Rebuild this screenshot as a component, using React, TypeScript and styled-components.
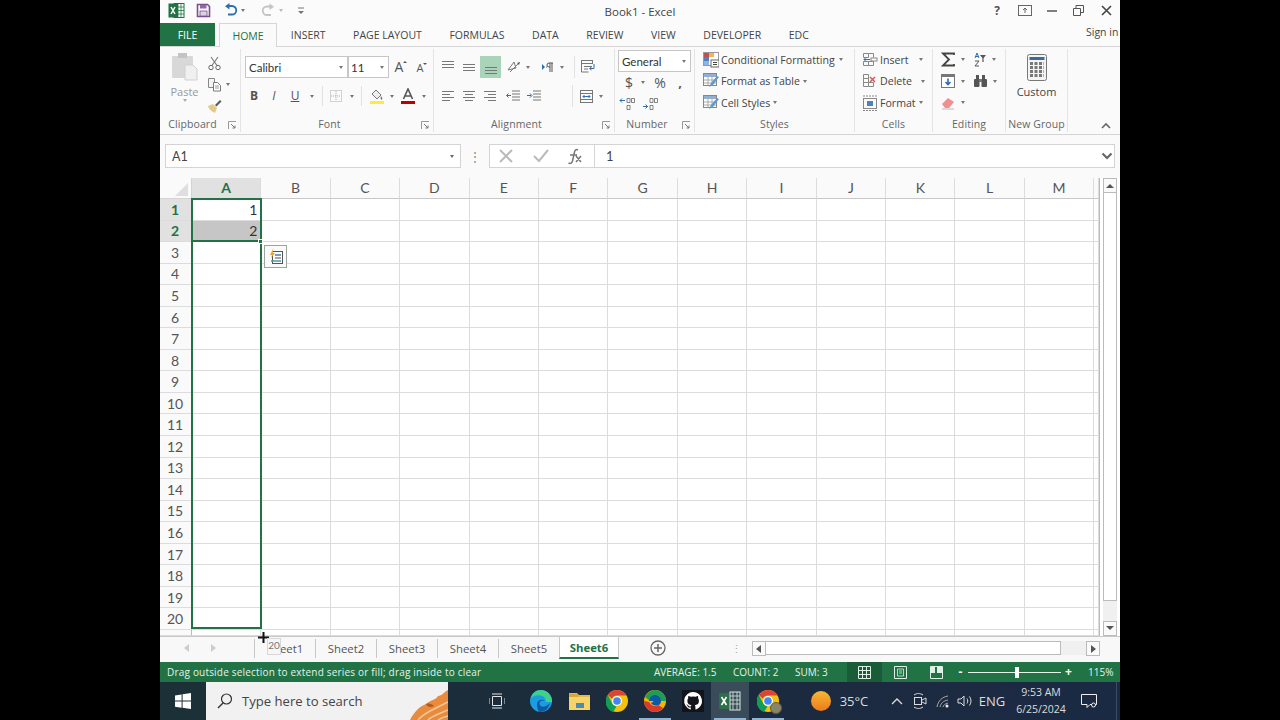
import React, { FC, ReactNode } from 'react';
import styled, { createGlobalStyle } from 'styled-components';

const GREEN = '#217346';
const UI_FONT = '"Open Sans", "Noto Sans", sans-serif';
const CELL_FONT = 'Lato, "Open Sans", sans-serif';

const GlobalStyle = createGlobalStyle`
  html, body { margin: 0; padding: 0; background: #000; overflow: hidden; }
  * { box-sizing: border-box; }
`;

const Stage = styled.div`
  width: 1280px;
  height: 720px;
  background: #000;
  display: flex;
  justify-content: center;
`;

const Screen = styled.div`
  width: 960px;
  height: 720px;
  display: flex;
  flex-direction: column;
  background: #fafafa;
  font-family: ${UI_FONT};
  color: #444;
  position: relative;
  overflow: hidden;
`;

/* title bar */
const TitleBar = styled.div`
  height: 23px;
  display: grid;
  grid-template-columns: 1fr auto 1fr;
  align-items: center;
  background: #fbfbfb;
  padding-bottom: 2px;
`;
const Quick = styled.div`
  display: flex;
  align-items: center;
`;
const Title = styled.div`
  font-size: 11.5px;
  color: #444;
  padding-top: 1px;
`;
const WinButtons = styled.div`
  display: flex;
  justify-content: flex-end;
  align-items: center;
  padding-right: 8px;
`;

const Slot = styled.span<{ $w?: number; $ml?: number }>`
  display: inline-flex;
  align-items: center;
  justify-content: center;
  flex: none;
  width: ${(p) => (p.$w ? `${p.$w}px` : 'auto')};
  margin-left: ${(p) => p.$ml ?? 0}px;
  svg { display: block; }
`;

const Caret = styled.span<{ $ml?: number; $c?: string }>`
  display: inline-block;
  flex: none;
  width: 0;
  height: 0;
  margin-left: ${(p) => p.$ml ?? 4}px;
  border-left: 2.5px solid transparent;
  border-right: 2.5px solid transparent;
  border-top: 3px solid ${(p) => p.$c ?? '#777'};
`;

/* ribbon tabs */
const TabRow = styled.div`
  height: 24px;
  display: flex;
  align-items: stretch;
  position: relative;
  border-bottom: 1px solid #d6d6d6;
  background: #fbfbfb;
`;
const FileTab = styled.div`
  width: 55px;
  background: ${GREEN};
  color: #fff;
  font-size: 10.5px;
  display: flex;
  align-items: center;
  justify-content: center;
`;
const HomeTab = styled.div`
  margin-left: 4px;
  width: 58px;
  height: 24px;
  background: #fafafa;
  border: 1px solid #d6d6d6;
  border-bottom: none;
  color: ${GREEN};
  font-size: 10.5px;
  display: flex;
  align-items: center;
  justify-content: center;
`;
const RibbonTab = styled.div`
  padding: 0 13.8px;
  font-size: 10.5px;
  color: #444;
  display: flex;
  align-items: center;
  white-space: nowrap;
`;
const SignIn = styled.div`
  position: absolute;
  right: 0;
  top: 2px;
  width: 34px;
  overflow: hidden;
  white-space: nowrap;
  font-size: 10.5px;
  color: #444;
`;

/* ribbon */
const Ribbon = styled.div`
  height: 88px;
  display: flex;
  background: #fafafa;
  border-bottom: 1px solid #d4d4d4;
  padding-top: 2px;
  position: relative;
`;
const Group = styled.div<{ $w: number }>`
  width: ${(p) => p.$w}px;
  height: 83px;
  flex: none;
  border-right: 1px solid #e4e4e4;
  display: flex;
  flex-direction: column;
  position: relative;
`;
const GroupBody = styled.div<{ $pl?: number; $pt?: number }>`
  flex: 1;
  display: flex;
  padding-left: ${(p) => p.$pl ?? 0}px;
  padding-top: ${(p) => p.$pt ?? 0}px;
  min-height: 0;
`;
const GroupLabel = styled.div<{ $launcher?: boolean }>`
  height: 14px;
  margin-bottom: 1px;
  font-size: 10.5px;
  letter-spacing: 0.1px;
  color: #666;
  text-align: center;
  line-height: 15px;
  padding-right: ${(p) => (p.$launcher ? 15 : 0)}px;
`;
const Launcher = styled.span`
  position: absolute;
  right: 3px;
  bottom: 2px;
  width: 9px;
  height: 9px;
  svg { display: block; }
`;
const Stack = styled.div<{ $gap?: number; $w?: number }>`
  display: flex;
  flex-direction: column;
  gap: ${(p) => p.$gap ?? 0}px;
  width: ${(p) => (p.$w ? `${p.$w}px` : 'auto')};
  flex: none;
`;
const IconRow = styled.div<{ $h?: number }>`
  display: flex;
  align-items: center;
  height: ${(p) => p.$h ?? 21.5}px;
`;
const BigButton = styled.div<{ $w: number; $muted?: boolean }>`
  width: ${(p) => p.$w}px;
  display: flex;
  flex-direction: column;
  align-items: center;
  flex: none;
  font-size: 11px;
  color: ${(p) => (p.$muted ? '#999' : '#444')};
`;
const BigLabel = styled.div`
  margin-top: 3px;
  line-height: 15px;
`;
const RowLabel = styled.span<{ $ml?: number }>`
  font-size: 10.6px;
  color: #444;
  margin-left: ${(p) => p.$ml ?? 3}px;
  white-space: nowrap;
`;
const Glyph = styled.span<{ $size: number }>`
  font-size: ${(p) => p.$size}px;
  color: #555;
  line-height: 1;
`;
const FontStep = styled.span<{ $size: number }>`
  display: inline-flex;
  align-items: flex-start;
  font-size: ${(p) => p.$size}px;
  line-height: 1;
  color: #555;
`;
const TinyTri = styled.span<{ $down?: boolean }>`
  width: 0;
  height: 0;
  margin-top: 1px;
  border-left: 2px solid transparent;
  border-right: 2px solid transparent;
  ${(p) => (p.$down ? 'border-top: 2.5px solid #555;' : 'border-bottom: 2.5px solid #555;')}
`;
const Combo = styled.div<{ $w: number; $pl?: number }>`
  width: ${(p) => p.$w}px;
  height: 22px;
  background: #fff;
  border: 1px solid #c6c6c6;
  display: flex;
  align-items: center;
  justify-content: space-between;
  padding: 0 4px 0 ${(p) => p.$pl ?? 3}px;
  font-family: ${CELL_FONT};
  font-size: 11.5px;
  color: #333;
  flex: none;
`;
const ActiveBlock = styled.span`
  display: inline-flex;
  width: 21px;
  height: 22px;
  align-items: center;
  justify-content: center;
  background: #a9d4b9;
  flex: none;
`;
const VLine = styled.span<{ $ml: number; $h?: number }>`
  width: 1px;
  height: ${(p) => p.$h ?? 20}px;
  background: #e2e2e2;
  margin-left: ${(p) => p.$ml}px;
  flex: none;
`;
const Collapse = styled.span`
  position: absolute;
  right: 9px;
  bottom: 5px;
  svg { display: block; }
`;

/* formula bar */
const FormulaBar = styled.div`
  height: 24px;
  margin-top: 9px;
  display: flex;
  align-items: stretch;
  padding-left: 5px;
  padding-right: 5px;
`;
const NameBox = styled.div`
  width: 296px;
  background: #fff;
  border: 1px solid #d4d4d4;
  display: flex;
  align-items: center;
  justify-content: space-between;
  padding: 0 6px;
  font-family: ${CELL_FONT};
  font-size: 12.5px;
  color: #444;
`;
const FxDots = styled.div`
  width: 28px;
  display: flex;
  align-items: center;
  justify-content: center;
  font-size: 12px;
  color: #888;
`;
const FxBox = styled.div`
  flex: 1;
  display: flex;
  background: #fff;
  border: 1px solid #d4d4d4;
  align-items: center;
`;
const FxButtons = styled.div`
  width: 105px;
  height: 100%;
  display: flex;
  align-items: center;
  border-right: 1px solid #d4d4d4;
`;
const FxInput = styled.div`
  flex: 1;
  padding-left: 11px;
  font-family: ${CELL_FONT};
  font-size: 13px;
  color: #444;
`;
const FxChevron = styled.span`
  width: 15px;
  display: flex;
  justify-content: center;
`;

/* sheet */
const SheetArea = styled.div`
  margin-top: 10px;
  height: 459px;
  display: flex;
  background: #fff;
  border-bottom: 1px solid #c8c8c8;
`;
const Sheet = styled.div`
  position: relative;
  width: 940px;
  height: 458px;
  display: grid;
  grid-template-columns: 32px repeat(13, 69.42px) 1fr;
  grid-template-rows: 21px repeat(20, 21.55px) 1fr;
  font-family: ${CELL_FONT};
  border-right: 1px solid #bbb;
`;
const Corner = styled.div`
  background: #fafafa;
  border-right: 1px solid #d4d4d4;
  border-bottom: 1px solid #d4d4d4;
  position: relative;
  &::after {
    content: '';
    position: absolute;
    right: 3px;
    bottom: 2px;
    border-left: 13px solid transparent;
    border-bottom: 13px solid #dfdfdf;
  }
`;
const ColHead = styled.div<{ $on?: boolean }>`
  background: ${(p) => (p.$on ? '#e1e1e1' : '#fafafa')};
  color: ${(p) => (p.$on ? GREEN : '#555')};
  font-weight: ${(p) => (p.$on ? 700 : 400)};
  border-right: 1px solid #dcdcdc;
  border-bottom: 1px solid ${(p) => (p.$on ? '#aaa' : '#c8c8c8')};
  font-size: 14px;
  display: flex;
  align-items: center;
  justify-content: center;
  padding-bottom: 2px;
`;
const RowHead = styled.div<{ $on?: boolean }>`
  background: ${(p) => (p.$on ? '#e1e1e1' : '#fafafa')};
  color: ${(p) => (p.$on ? GREEN : '#555')};
  font-weight: ${(p) => (p.$on ? 700 : 400)};
  border-right: 1px solid #bbb;
  border-bottom: 1px solid #dcdcdc;
  font-size: 14px;
  display: flex;
  align-items: center;
  justify-content: center;
  padding-right: 1px;
`;
const Cell = styled.div<{ $shade?: boolean }>`
  background: ${(p) => (p.$shade ? '#c6c6c6' : '#fff')};
  border-right: 1px solid #dcdcdc;
  border-bottom: 1px solid #dcdcdc;
  font-size: 14px;
  color: #333;
  display: flex;
  align-items: center;
  justify-content: flex-end;
  padding-right: 3px;
`;
const DragRange = styled.div`
  position: absolute;
  left: 31px;
  top: 20px;
  width: 71px;
  height: 431px;
  border: 2px solid ${GREEN};
  pointer-events: none;
`;
const SelectEdge = styled.div`
  position: absolute;
  left: 31px;
  top: 62px;
  width: 71px;
  height: 2px;
  background: ${GREEN};
`;
const FillHandle = styled.div`
  position: absolute;
  left: 98px;
  top: 61px;
  width: 5px;
  height: 5px;
  background: ${GREEN};
  border: 1px solid #fff;
`;
const AutoFill = styled.div`
  position: absolute;
  left: 104px;
  top: 67px;
  width: 23px;
  height: 23px;
  background: #fafafa;
  border: 1px solid #9aa5a0;
  display: flex;
  align-items: center;
  justify-content: center;
`;
const VScroll = styled.div`
  margin-left: 3px;
  width: 14px;
  height: 458px;
  display: flex;
  flex-direction: column;
  background: #f0f0f0;
`;
const ScrollBtn = styled.div`
  width: 14px;
  height: 15px;
  flex: none;
  background: #fafafa;
  border: 1px solid #bbb;
  display: flex;
  align-items: center;
  justify-content: center;
`;
const VThumb = styled.div`
  height: 408px;
  background: #fff;
  border: 1px solid #bbb;
  border-top: none;
`;
const VTrack = styled.div`
  flex: 1;
`;

/* sheet tabs */
const TabsBar = styled.div`
  height: 25px;
  display: flex;
  align-items: center;
  background: #f8f8f8;
  padding-bottom: 3px;
`;
const NavArrows = styled.div`
  width: 94px;
  display: flex;
  align-items: center;
  padding-left: 24px;
  gap: 20px;
  flex: none;
`;
const SheetTab = styled.div<{ $on?: boolean }>`
  height: ${(p) => (p.$on ? '22px' : '19px')};
  width: ${(p) => (p.$on ? '60px' : '61px')};
  flex: none;
  display: flex;
  align-items: center;
  justify-content: center;
  font-size: 11.3px;
  font-weight: ${(p) => (p.$on ? 700 : 400)};
  color: ${(p) => (p.$on ? GREEN : '#555')};
  background: ${(p) => (p.$on ? '#fff' : 'transparent')};
  border-left: 1px solid #c8c8c8;
  border-bottom: ${(p) => (p.$on ? `2px solid ${GREEN}` : 'none')};
  border-right: ${(p) => (p.$on ? '1px solid #c8c8c8' : 'none')};
`;
const Dots = styled.div`
  margin-left: 62px;
  width: 16px;
  text-align: center;
  color: #aaa;
  font-size: 11px;
  line-height: 1;
`;
const HScroll = styled.div`
  margin-left: 8px;
  width: 348px;
  height: 14px;
  display: flex;
`;
const HThumb = styled.div`
  width: 295px;
  background: #fff;
  border-top: 1px solid #bbb;
  border-bottom: 1px solid #bbb;
  border-right: 1px solid #bbb;
`;
const HTrack = styled.div`
  flex: 1;
  background: #f0f0f0;
`;
const CursorMark = styled.div`
  position: absolute;
  left: 97px;
  top: 631px;
  width: 13px;
  height: 13px;
  svg { display: block; }
`;
const DragTip = styled.div`
  position: absolute;
  left: 107px;
  top: 638px;
  width: 14px;
  height: 17px;
  background: #f6f6f6;
  border: 1px solid #d8d8d8;
  font-size: 10px;
  line-height: 13px;
  color: #777;
  text-align: center;
  font-family: ${CELL_FONT};
`;

/* status bar */
const StatusBar = styled.div`
  height: 20px;
  background: ${GREEN};
  display: flex;
  align-items: center;
  color: #e6f2ea;
  padding-left: 7px;
  position: relative;
  flex: none;
`;
const StatusText = styled.span`
  width: 487px;
  font-size: 10px;
  letter-spacing: 0.19px;
  white-space: nowrap;
  flex: none;
`;
const StatusStat = styled.span<{ $w: number }>`
  width: ${(p) => p.$w}px;
  white-space: nowrap;
  flex: none;
  font-size: 10px;
`;
const ViewBtn = styled.span<{ $on?: boolean; $w: number }>`
  width: ${(p) => p.$w}px;
  height: 20px;
  display: inline-flex;
  align-items: center;
  justify-content: center;
  background: ${(p) => (p.$on ? '#1a5c38' : 'transparent')};
  flex: none;
`;
const ZoomTrack = styled.span`
  position: relative;
  width: 93px;
  height: 1px;
  background: #e6f2ea;
  margin: 0 4.5px 0 3.5px;
  flex: none;
  &::after {
    content: '';
    position: absolute;
    left: 47px;
    top: -5px;
    width: 4px;
    height: 11px;
    background: #fff;
  }
`;
const ZoomSign = styled.span<{ $ml?: number }>`
  font-size: 12px;
  font-weight: 700;
  line-height: 1;
  color: #fff;
  width: 7px;
  margin-left: ${(p) => p.$ml ?? 0}px;
  text-align: center;
  flex: none;
`;
const ZoomPct = styled.span`
  font-size: 10px;
  margin-left: 16px;
  flex: none;
`;

/* taskbar */
const Taskbar = styled.div`
  height: 38px;
  display: flex;
  align-items: stretch;
  background: linear-gradient(90deg, #1c2f3a 0%, #1b2b3c 50%, #1b2a44 100%);
  color: #e8e8e8;
  flex: none;
`;
const StartBtn = styled.div`
  width: 46px;
  display: flex;
  align-items: center;
  justify-content: center;
  background: #1c3038;
`;
const SearchBox = styled.div`
  width: 242px;
  background: #f1f1f1;
  display: flex;
  align-items: center;
  padding-left: 11px;
  color: #444;
  font-size: 13.1px;
  position: relative;
  overflow: hidden;
`;
const SearchText = styled.span`
  margin-left: 9px;
  white-space: nowrap;
`;
const SearchArt = styled.span`
  position: absolute;
  right: 0;
  top: 0;
  svg { display: block; }
`;
const TaskApp = styled.div<{ $w?: number; $ml?: number; $on?: boolean; $active?: boolean }>`
  width: ${(p) => p.$w ?? 38}px;
  margin-left: ${(p) => p.$ml ?? 0}px;
  position: relative;
  display: flex;
  align-items: center;
  justify-content: center;
  flex: none;
  background: ${(p) => (p.$active ? '#3a4c5a' : 'transparent')};
  ${(p) =>
    p.$on
      ? `&::after {
    content: '';
    position: absolute;
    left: 3px;
    right: 3px;
    bottom: 0;
    height: 2px;
    background: #8fb4d4;
  }`
      : ''}
  svg { display: block; }
`;
const ProfileBadge = styled.span`
  position: absolute;
  left: 21px;
  top: 20px;
  width: 12px;
  height: 12px;
  border-radius: 50%;
  background: #8a8468;
  border: 1px solid #5f5c4a;
`;
const TrayText = styled.span`
  font-size: 13px;
  color: #ddd;
  white-space: nowrap;
`;
const Clock = styled.div`
  width: 54px;
  margin-left: 10px;
  text-align: center;
  font-size: 10.5px;
  line-height: 17.5px;
  color: #ddd;
  flex: none;
  align-self: center;
  white-space: nowrap;
`;
const TaskEnd = styled.div`
  width: 1px;
  margin-left: 19px;
  background: #3d4c5e;
`;

/* drawings */
const Svg: FC<{ w: number; h?: number; children: ReactNode }> = ({ w, h, children }) => (
  <svg width={w} height={h ?? w} viewBox={`0 0 ${w} ${h ?? w}`} fill="none">
    {children}
  </svg>
);

const Lines: FC<{ kind: string }> = ({ kind }) => {
  const x: Record<string, number[][]> = {
    top: [[2, 14, 2], [2, 14, 5], [2, 14, 8]],
    mid: [[2, 14, 5], [2, 14, 8], [2, 14, 11]],
    bottom: [[2, 14, 8], [2, 14, 11], [2, 14, 14]],
    left: [[2, 14, 3], [2, 10, 6], [2, 14, 9], [2, 10, 12]],
    center: [[2, 14, 3], [4, 12, 6], [2, 14, 9], [4, 12, 12]],
    right: [[2, 14, 3], [6, 14, 6], [2, 14, 9], [6, 14, 12]],
  };
  return (
    <Svg w={16}>
      {x[kind].map(([a, b, y]) => (
        <path key={y} d={`M${a} ${y + 0.5}H${b}`} stroke="#777" />
      ))}
    </Svg>
  );
};

const LauncherIcon = () => (
  <Launcher>
    <Svg w={9}>
      <path d="M.5 8V.5H8" stroke="#999" />
      <path d="M3 3l4 4M7 4.500V7H4.500" stroke="#777" />
    </Svg>
  </Launcher>
);

const ExcelLogo = () => (
  <Svg w={17}>
    <rect x="6" y="1.500" width="10" height="14" fill="#fff" stroke="#217346" />
    <path d="M10 2v13M13 2v13M7 5h9M7 8.500h9M7 12h9" stroke="#217346" strokeWidth=".8" />
    <rect x="0.500" y="1.500" width="9.500" height="14" fill="#217346" />
    <path d="M3 5l4 7M7 5l-4 7" stroke="#fff" strokeWidth="1.500" />
  </Svg>
);

const SaveIcon = () => (
  <Svg w={15}>
    <path d="M1.500 1.500h10l2 2v10h-12z" stroke="#7b4f8e" strokeWidth="1.600" />
    <rect x="4" y="2" width="6.500" height="3.500" fill="#8f6aa3" />
    <rect x="4" y="8" width="7" height="5" fill="#dcd0e2" stroke="#7b4f8e" strokeWidth=".8" />
  </Svg>
);

const UndoIcon: FC<{ c: string }> = ({ c }) => (
  <Svg w={15}>
    <path d="M5.500 3H9a4 4 0 0 1 0 8.500H5" stroke={c} strokeWidth="1.800" />
    <path d="M6.500 0L2 3.200l4.500 3.200z" fill={c} />
  </Svg>
);

const RedoIcon = () => (
  <Svg w={15}>
    <path d="M9.500 3.500H6a4 4 0 0 0 0 8.500h4" stroke="#c4c4c4" strokeWidth="1.800" />
    <path d="M8.500 .5L13 3.700 8.500 7z" fill="#c4c4c4" />
  </Svg>
);

const PasteIcon = () => (
  <Svg w={28} h={28}>
    <rect x="1" y="3" width="21" height="22" rx="1" fill="#d8d8d8" />
    <rect x="7" y="0" width="9" height="5" fill="#c4c4c4" />
    <path d="M14 12h8l4 4v11H14z" fill="#f0f0f0" stroke="#d0d0d0" />
  </Svg>
);

const ScissorsIcon = () => (
  <Svg w={15}>
    <circle cx="4" cy="11.500" r="2.200" stroke="#666" />
    <circle cx="11" cy="11.500" r="2.200" stroke="#666" />
    <path d="M5 9.500L11 1M10 9.500L4 1" stroke="#777" strokeWidth="1.100" />
  </Svg>
);

const CopyIcon = () => (
  <Svg w={15}>
    <path d="M1.500 1.500h6v9h-6z" fill="#f4f4f4" stroke="#888" />
    <path d="M6.500 5.500h4l3 3v5.500h-7z" fill="#fff" stroke="#777" />
    <path d="M8 9h4M8 11h4" stroke="#999" />
  </Svg>
);

const PainterIcon = () => (
  <Svg w={15}>
    <path d="M1 7l5-2 4 4-2 5C6 13 2 11 1 7z" fill="#e3c98a" />
    <path d="M8 6l5-5 1.500 1.500-5 5z" fill="#5a5a5a" />
  </Svg>
);

const FillColorIcon = () => (
  <Svg w={16}>
    <path d="M3 6l4-4 5 5-4 4z" fill="#eee" stroke="#777" />
    <path d="M12 8c1 1.500 2 2.500 1 3.500s-2-1-1-3.500z" fill="#777" />
    <rect x="1" y="13" width="14" height="3" fill="#ffeb3b" />
  </Svg>
);

const FontColorIcon = () => (
  <Svg w={16}>
    <path d="M3.500 11L8 1l4.500 10M5 8h6" stroke="#555" strokeWidth="1.600" />
    <rect x="1" y="13" width="14" height="3" fill="#c00000" />
  </Svg>
);

const BorderIcon = () => (
  <Svg w={14}>
    <rect x="1.500" y="1.500" width="11" height="11" stroke="#aaa" strokeDasharray="1 1" />
    <path d="M7 2v10M2 7h10" stroke="#aaa" strokeDasharray="1 1" />
  </Svg>
);

const OrientIcon = () => (
  <Svg w={16}>
    <path d="M2 11l6-8 2 6zM4 13l9-9" stroke="#777" />
    <path d="M11 4l3-1-1 3z" fill="#555" />
  </Svg>
);

const ParaIcon = () => (
  <Svg w={14}>
    <path d="M1 4l3 3-3 3z" fill="#2a6fb5" />
    <path d="M8 3h4M8 3a2 2 0 0 0 0 4h1V3m2 0v9M9 7v5" stroke="#555" />
    <path d="M5 7h1" stroke="#2a6fb5" />
  </Svg>
);

const IndentIcon: FC<{ flip?: boolean }> = ({ flip }) => (
  <Svg w={16}>
    <path d="M7 3h8M7 6h8M7 9h8M7 12h8" stroke="#777" />
    <path d={flip ? 'M1 7.500h4M4 5.500l2 2-2 2' : 'M2 7.500h4M3.500 5.500l-2 2 2 2'} stroke="#2a6fb5" />
  </Svg>
);

const WrapIcon = () => (
  <Svg w={16}>
    <rect x="1.500" y="1.500" width="11" height="3" stroke="#777" />
    <path d="M1.500 5v8h7M4 7.500h8M4 10h4" stroke="#777" />
    <path d="M14 5v4.500h-4M11.500 8l-2 1.500 2 1.500" stroke="#2a6fb5" />
  </Svg>
);

const MergeIcon = () => (
  <Svg w={15}>
    <rect x="1.500" y="1.500" width="12" height="12" stroke="#777" />
    <path d="M1.500 4.500h12M1.500 10.500h12" stroke="#777" />
    <path d="M4 7.500h7M5.500 6L4 7.500 5.500 9M9.500 6L11 7.500 9.500 9" stroke="#2a6fb5" />
  </Svg>
);

const DecimalIcon: FC<{ more?: boolean }> = ({ more }) => (
  <Svg w={16} h={14}>
    <path
      d={more ? 'M1 10.500h5M3 8.500l-2 2 2 2' : 'M5 3.500h5M7.500 1.500l2 2-2 2'}
      stroke="#2a6fb5"
      transform={more ? 'translate(0,-7)' : 'translate(-4,6)'}
    />
    <path d="M8 1.500h3v4H8zM12.500 1.500h3v4h-3zM8 8.500h3v4H8z" stroke="#666" strokeWidth=".8" />
  </Svg>
);

const CondFormatIcon = () => (
  <Svg w={16}>
    <rect x="0.500" y="0.500" width="15" height="13" fill="#fff" stroke="#999" />
    <rect x="1" y="1" width="5" height="4" fill="#c0504d" />
    <rect x="6" y="1" width="5" height="4" fill="#f3b15e" />
    <rect x="1" y="5" width="5" height="4" fill="#4f81bd" />
    <rect x="1" y="9" width="5" height="4" fill="#8db4e2" />
    <rect x="8" y="8" width="8" height="7" fill="#fff" stroke="#666" />
    <path d="M10 10.500h4M10 12.500h4" stroke="#444" />
  </Svg>
);

const TableIcon = () => (
  <Svg w={16}>
    <rect x="0.500" y="0.500" width="13" height="12" fill="#fff" stroke="#888" />
    <rect x="1" y="1" width="12" height="3" fill="#8fb0d8" />
    <path d="M5 1v11M9 1v11M1 7h12M1 10h12" stroke="#aaa" />
    <path d="M6 14l2-4 6-7 2 1-6 8z" fill="#5b9bd5" />
  </Svg>
);

const InsertCellsIcon = () => (
  <Svg w={16}>
    <path d="M1.500 1.500h5v4h-5zM1.500 9.500h5v4h-5zM6.500 1.500h5v4M6.500 9.500h5v4h-5" stroke="#888" />
    <rect x="9" y="6" width="6" height="3" fill="#fff" stroke="#888" />
    <path d="M8 7.500H2M4 5.500l-2 2 2 2" stroke="#2a6fb5" />
  </Svg>
);

const DeleteCellsIcon = () => (
  <Svg w={16}>
    <path d="M1.500 1.500h5v4h-5zM1.500 9.500h5v4h-5zM6.500 9.500h5v4h-5" stroke="#888" />
    <path d="M8 4l5 5M13 4l-5 5" stroke="#d9534f" strokeWidth="1.400" />
    <path d="M1.500 5.500h5v4h-5z" stroke="#888" />
  </Svg>
);

const FormatCellsIcon = () => (
  <Svg w={16}>
    <rect x="1.500" y="3.500" width="13" height="10" stroke="#888" />
    <path d="M1 1h14" stroke="#888" strokeDasharray="2 1" />
    <path d="M1 15.500h14" stroke="#888" strokeDasharray="2 1" />
    <rect x="5" y="6" width="6" height="5" fill="#4f81bd" />
  </Svg>
);

const SigmaIcon = () => (
  <Svg w={15}>
    <path d="M13 3V1.500H2l6 6-6 6h11V12" stroke="#444" strokeWidth="1.800" />
  </Svg>
);

const SortIcon = () => (
  <Svg w={15}>
    <path d="M3 6l2-5 2 5M3.600 4.500h2.800" stroke="#2a6fb5" />
    <path d="M3 9h4l-4 5h4" stroke="#555" />
    <path d="M8 3h6l-2.400 3v4h-1.200V6z" fill="#555" />
  </Svg>
);

const FillDownIcon = () => (
  <Svg w={14}>
    <rect x="0.500" y="0.500" width="13" height="13" fill="#fff" stroke="#777" />
    <rect x="1" y="1" width="12" height="2" fill="#777" />
    <path d="M7 4.500v6M4.500 8L7 10.500 9.500 8" stroke="#2a6fb5" strokeWidth="1.600" />
  </Svg>
);

const FindIcon = () => (
  <Svg w={15}>
    <rect x="1" y="5" width="5.500" height="8" rx="1" fill="#555" />
    <rect x="8.500" y="5" width="5.500" height="8" rx="1" fill="#555" />
    <rect x="3" y="1" width="3" height="5" fill="#555" />
    <rect x="9" y="1" width="3" height="5" fill="#555" />
    <rect x="6" y="5" width="3" height="3" fill="#777" />
  </Svg>
);

const EraserIcon = () => (
  <Svg w={15}>
    <path d="M1 9l6-6 6 4-5 6H4z" fill="#ef8f8f" />
    <path d="M1 14h12" stroke="#bbb" />
  </Svg>
);

const CalcIcon = () => (
  <Svg w={20} h={27}>
    <rect x="0.500" y="0.500" width="19" height="26" rx="2" fill="#f4f4f4" stroke="#777" />
    <rect x="2.500" y="3" width="15" height="3" fill="#3d6a96" />
    {[8, 12, 16, 20].map((y) => (
      <path key={y} d={`M3 ${y + 1.5}h14`} stroke="#777" strokeWidth="3" strokeDasharray="3 1.500" />
    ))}
  </Svg>
);

const ChevDown: FC<{ c?: string }> = ({ c }) => (
  <Svg w={12} h={8}>
    <path d="M1.500 1.500L6 6l4.500-4.500" stroke={c ?? '#666'} strokeWidth="2.200" />
  </Svg>
);

const AutoFillIcon = () => (
  <Svg w={16}>
    <rect x="4.500" y="2.500" width="10" height="12" fill="#fff" stroke="#555" />
    <path d="M7 6h6" stroke="#4a7f9f" strokeWidth="1.500" />
    <path d="M7 9h6" stroke="#888" strokeWidth="1.500" />
    <path d="M3 12h10" stroke="#4a9a9f" strokeWidth="1.500" />
    <path d="M5 0L2 6h2L3 9l4-5H5z" fill="#e8a33d" />
  </Svg>
);

const NavTri: FC<{ left?: boolean; c?: string }> = ({ left, c }) => (
  <Svg w={6} h={8}>
    <path d={left ? 'M5 0v8L0 4z' : 'M1 0v8l5-4z'} fill={c ?? '#ccc'} />
  </Svg>
);

const PlusCircle = () => (
  <Svg w={16}>
    <circle cx="8" cy="8" r="7" stroke="#666" strokeWidth="1.300" />
    <path d="M8 4v8M4 8h8" stroke="#666" strokeWidth="1.500" />
  </Svg>
);

const ViewNormal = () => (
  <Svg w={13}>
    <path d="M.5.5h12v12H.5zM4.500.5v12M8.500.5v12M.5 4.500h12M.5 8.500h12" stroke="#dff0e6" />
  </Svg>
);
const ViewLayout = () => (
  <Svg w={13}>
    <path d="M.5.5h12v12H.5z" stroke="#dff0e6" />
    <path d="M3.500 3h6v7h-6zM5 5h3M5 7h3" stroke="#dff0e6" strokeWidth=".8" />
  </Svg>
);
const ViewBreak = () => (
  <Svg w={13}>
    <path d="M.5.5h12v12H.5z" stroke="#dff0e6" />
    <path d="M1 1h4v6H1zM7 1h5v6H7z" fill="#dff0e6" />
  </Svg>
);

const WinLogo = () => (
  <Svg w={16}>
    <path d="M0 2.400L6.600 1.400V7.600H0zM7.600 1.300L16 0V7.600H7.600zM0 8.500H6.600V14.700L0 13.700zM7.600 8.500H16V16L7.600 14.800z" fill="#fff" />
  </Svg>
);

const SearchGlass = () => (
  <Svg w={16}>
    <circle cx="9.500" cy="6" r="5" stroke="#333" strokeWidth="1.200" />
    <path d="M6 10l-5 5" stroke="#333" strokeWidth="1.400" />
  </Svg>
);

const SearchDoodle = () => (
  <Svg w={66} h={38}>
    <path d="M28 38C32 30 38 24 44 22c4-4 10-4 12-8 4 0 6-4 10-6v30z" fill="#e88b3c" />
    <path d="M36 38c5-6 12-9 18-12s8-4 12-6M46 38c4-4 10-6 20-10M56 38c3-2 6-3 10-4" stroke="#f7c79a" strokeWidth="1.500" />
    <path d="M44 22c3-1 6 0 8 2-3 2-7 1-8-2z" fill="#b35a1e" />
  </Svg>
);

const TaskViewIcon = () => (
  <Svg w={16}>
    <path d="M3.500 3.500h9v9h-9z" stroke="#e4e4e4" />
    <path d="M0 5v6M16 5v6M3 1h10M3 15h10" stroke="#e4e4e4" />
  </Svg>
);

const EdgeIcon = () => (
  <svg width="22" height="22" viewBox="0 0 22 22">
    <circle cx="11" cy="11" r="11" fill="#1b9de2" />
    <path d="M22 11c0-6-5-11-11-11C6 0 2 3 1 8c3-3 9-4 13-1 2 2 2 4 1 5h7z" fill="#3fd08a" />
    <path d="M7 14c0-3 3-5 7-4 1 3-1 5-3 6 3 1 6 0 9-3-1 5-5 9-10 9-2 0-3-5-3-8z" fill="#0c59a4" />
    <ellipse cx="13" cy="13.500" rx="3.500" ry="3" fill="#1b9de2" />
  </svg>
);

const FolderIcon = () => (
  <svg width="21" height="20" viewBox="0 0 21 20">
    <path d="M0 2h8l2 2h11v15H0z" fill="#e9b84a" />
    <rect x="0" y="6" width="21" height="13" fill="#f6d469" />
    <rect x="0" y="3" width="9" height="3" fill="#d9a63a" />
    <rect x="7" y="12" width="8" height="5" fill="#4a8cb8" />
  </svg>
);

const ChromeIcon: FC<{ size?: number }> = ({ size }) => (
  <svg width={size ?? 22} height={size ?? 22} viewBox="0 0 22 22">
    <circle cx="11" cy="11" r="11" fill="#f4c20d" />
    <path d="M11 0a11 11 0 0 1 9.500 5.500H11a5.500 5.500 0 0 0-5 3.200L1.800 5A11 11 0 0 1 11 0z" fill="#db4437" />
    <path d="M1.800 5L6.500 14a5.500 5.500 0 0 0 4 2.500L7 22A11 11 0 0 1 1.800 5z" fill="#0f9d58" />
    <circle cx="11" cy="11" r="5" fill="#fff" />
    <circle cx="11" cy="11" r="3.800" fill="#4285f4" />
  </svg>
);

const CanaryIcon = () => (
  <svg width="22" height="22" viewBox="0 0 22 22">
    <circle cx="11" cy="11" r="11" fill="#f4b400" />
    <path d="M11 0a11 11 0 0 1 11 11h-5C15 5 7 5 5 10L1 7C3 3 7 0 11 0z" fill="#1f9d55" />
    <path d="M0 11c0 6 5 11 11 11 4 0 6-2 8-4l-5-3c-3 2-7 1-9-3z" fill="#d93a2b" />
    <path d="M5 11a6 6 0 0 1 12 0c0 2-1 4-3 4-2 1-6 0-7-2l2-1c1-3 4-3 5-1z" fill="#0c59a4" />
  </svg>
);

const GithubIcon = () => (
  <svg width="22" height="22" viewBox="0 0 22 22">
    <rect width="22" height="22" fill="#11141a" />
    <path
      d="M11 2a9 9 0 0 0-2.800 17.500c.4.1.6-.2.6-.4v-1.600c-2.500.5-3-1.100-3-1.100-.4-1-1-1.300-1-1.300-.8-.6.1-.6.1-.6.9.1 1.400 1 1.400 1 .8 1.400 2.100 1 2.600.8.1-.6.3-1 .6-1.200-2-.2-4.100-1-4.100-4.400 0-1 .3-1.800.9-2.400-.1-.2-.4-1.100.1-2.400 0 0 .8-.2 2.500.9a8.700 8.700 0 0 1 4.500 0c1.700-1.100 2.500-.9 2.500-.9.500 1.300.2 2.200.1 2.400.6.6.9 1.400.9 2.400 0 3.500-2.100 4.200-4.100 4.400.3.3.6.8.6 1.700v2.300c0 .2.2.5.6.4A9 9 0 0 0 11 2z"
      fill="#fff"
    />
  </svg>
);

const ExcelTask = () => (
  <svg width="22" height="20" viewBox="0 0 22 20">
    <rect x="11" y="1" width="10" height="18" fill="none" stroke="#d8e6dd" strokeWidth="1" />
    <path d="M14 1v18M18 1v18M11 5h10M11 9h10M11 13h10" stroke="#d8e6dd" strokeWidth=".8" />
    <rect x="0" y="2" width="10" height="16" fill="#2c6e49" />
    <path d="M2.500 6l5 8M7.500 6l-5 8" stroke="#fff" strokeWidth="1.600" />
  </svg>
);

const WeatherSun = () => (
  <svg width="20" height="20" viewBox="0 0 20 20">
    <defs>
      <linearGradient id="sun" x1="0" y1="0" x2="0" y2="1">
        <stop offset="0" stopColor="#f7b733" />
        <stop offset="1" stopColor="#ee7a1c" />
      </linearGradient>
    </defs>
    <circle cx="10" cy="10" r="10" fill="url(#sun)" />
  </svg>
);

const TrayChevron = () => (
  <Svg w={12} h={8}>
    <path d="M1 7l5-5 5 5" stroke="#ddd" strokeWidth="1.300" />
  </Svg>
);
const MeetIcon = () => (
  <Svg w={14} h={18}>
    <path d="M1 3c3-2 6-2 9 0M1 15c3 2 6 2 9 0" stroke="#ddd" />
    <rect x="1.500" y="5.500" width="7" height="7" stroke="#ddd" />
    <path d="M9 8l4-2v6l-4-2" stroke="#ddd" />
  </Svg>
);
const WifiIcon = () => (
  <Svg w={14}>
    <path d="M1 13C2 7 6 3 12 2M4 13c1-4 3-6 8-7M7 13c.5-2 2-3 5-4" stroke="#aaa" />
    <circle cx="11" cy="12" r="1.500" fill="#eee" />
  </Svg>
);
const VolumeIcon = () => (
  <Svg w={16}>
    <path d="M1 6h3l3-3v10l-3-3H1z" stroke="#ddd" />
    <path d="M10 5.500c1 1.500 1 3.500 0 5M12.500 3.500c2 3 2 6 0 9" stroke="#ddd" />
  </Svg>
);
const NoticeIcon = () => (
  <Svg w={16}>
    <path d="M.5 1.500h15v10H9l-3 3v-3H.5z" stroke="#eee" />
    <circle cx="12.500" cy="12" r="2" fill="#1b2a44" stroke="#eee" />
  </Svg>
);

const colNames = 'ABCDEFGHIJKLM'.split('');
const rowNums = Array.from({ length: 20 }, (_, i) => i + 1);
const ribbonTabs = ['INSERT', 'PAGE LAYOUT', 'FORMULAS', 'DATA', 'REVIEW', 'VIEW', 'DEVELOPER', 'EDC'];
const sheets = ['Sheet1', 'Sheet2', 'Sheet3', 'Sheet4', 'Sheet5'];

const cellValue = (col: string, row: number) => (col === 'A' && row <= 2 ? row : '');

const SheetGrid: FC = () => (
  <Sheet>
    <Corner />
    {colNames.map((c) => (
      <ColHead key={c} $on={c === 'A'}>
        {c}
      </ColHead>
    ))}
    <ColHead />
    {rowNums.map((r) => (
      <React.Fragment key={r}>
        <RowHead $on={r <= 2}>{r}</RowHead>
        {colNames.map((c) => (
          <Cell key={c} $shade={c === 'A' && r === 2}>
            {cellValue(c, r)}
          </Cell>
        ))}
        <Cell />
      </React.Fragment>
    ))}
    <RowHead />
    {colNames.map((c) => (
      <Cell key={c} />
    ))}
    <Cell />
    <DragRange />
    <SelectEdge />
    <FillHandle />
    <AutoFill>
      <AutoFillIcon />
    </AutoFill>
  </Sheet>
);

const RibbonBar: FC = () => (
  <Ribbon>
    <Group $w={81}>
      <GroupBody $pl={11} $pt={4}>
        <BigButton $w={27} $muted>
          <PasteIcon />
          <BigLabel>Paste</BigLabel>
          <Caret $ml={0} $c="#aaa" />
        </BigButton>
        <Stack $w={36}>
          <IconRow $h={21}>
            <Slot $w={15} $ml={9}>
              <ScissorsIcon />
            </Slot>
          </IconRow>
          <IconRow>
            <Slot $w={15} $ml={9}>
              <CopyIcon />
            </Slot>
            <Caret />
          </IconRow>
          <IconRow>
            <Slot $w={15} $ml={9}>
              <PainterIcon />
            </Slot>
          </IconRow>
        </Stack>
      </GroupBody>
      <GroupLabel $launcher>Clipboard</GroupLabel>
      <LauncherIcon />
    </Group>

    <Group $w={193}>
      <GroupBody $pl={4} $pt={7}>
        <Stack $gap={7}>
          <IconRow $h={22}>
            <Combo $w={103}>
              Calibri
              <Caret />
            </Combo>
            <Combo $w={41} $pl={2}>
              11
              <Caret />
            </Combo>
            <Slot $w={16} $ml={4}>
              <FontStep $size={14}>
                A<TinyTri />
              </FontStep>
            </Slot>
            <Slot $w={16} $ml={5}>
              <FontStep $size={11}>
                A<TinyTri $down />
              </FontStep>
            </Slot>
          </IconRow>
          <IconRow $h={22}>
            <Slot $w={12} $ml={3}>
              <Glyph $size={12}>
                <b>B</b>
              </Glyph>
            </Slot>
            <Slot $w={12} $ml={8}>
              <Glyph $size={12}>
                <i>I</i>
              </Glyph>
            </Slot>
            <Slot $w={12} $ml={9}>
              <Glyph $size={12}>
                <u>U</u>
              </Glyph>
            </Slot>
            <Caret $ml={9} />
            <VLine $ml={8} />
            <Slot $w={14} $ml={6}>
              <BorderIcon />
            </Slot>
            <Caret $ml={7} />
            <VLine $ml={7} />
            <Slot $w={16} $ml={7}>
              <FillColorIcon />
            </Slot>
            <Caret $ml={5} />
            <Slot $w={16} $ml={6}>
              <FontColorIcon />
            </Slot>
            <Caret $ml={6} />
          </IconRow>
        </Stack>
      </GroupBody>
      <GroupLabel $launcher>Font</GroupLabel>
      <LauncherIcon />
    </Group>

    <Group $w={181}>
      <GroupBody $pl={6} $pt={7}>
        <Stack $gap={7}>
          <IconRow $h={22}>
            <Slot $w={16}>
              <Lines kind="top" />
            </Slot>
            <Slot $w={16} $ml={5}>
              <Lines kind="mid" />
            </Slot>
            <Slot $ml={3}>
              <ActiveBlock>
                <Lines kind="bottom" />
              </ActiveBlock>
            </Slot>
            <Slot $w={16} $ml={5}>
              <OrientIcon />
            </Slot>
            <Caret />
            <Slot $w={14} $ml={11}>
              <ParaIcon />
            </Slot>
            <Caret $ml={5} />
            <VLine $ml={10} $h={22} />
            <Slot $w={16} $ml={5}>
              <WrapIcon />
            </Slot>
          </IconRow>
          <IconRow $h={22}>
            <Slot $w={16}>
              <Lines kind="left" />
            </Slot>
            <Slot $w={16} $ml={5}>
              <Lines kind="center" />
            </Slot>
            <Slot $w={16} $ml={5}>
              <Lines kind="right" />
            </Slot>
            <Slot $w={16} $ml={7}>
              <IndentIcon />
            </Slot>
            <Slot $w={16} $ml={5}>
              <IndentIcon flip />
            </Slot>
            <VLine $ml={30} $h={22} />
            <Slot $w={15} $ml={6}>
              <MergeIcon />
            </Slot>
            <Caret $ml={5} />
          </IconRow>
        </Stack>
      </GroupBody>
      <GroupLabel $launcher>Alignment</GroupLabel>
      <LauncherIcon />
    </Group>

    <Group $w={80}>
      <GroupBody $pl={3} $pt={1}>
        <Stack>
          <Combo $w={73} $pl={3}>
            General
            <Caret />
          </Combo>
          <IconRow $h={21}>
            <Slot $w={12} $ml={5}>
              <Glyph $size={14}>$</Glyph>
            </Slot>
            <Caret $ml={6} />
            <Slot $w={14} $ml={8}>
              <Glyph $size={14}>%</Glyph>
            </Slot>
            <Slot $w={8} $ml={9}>
              <Glyph $size={13}>
                <b>,</b>
              </Glyph>
            </Slot>
          </IconRow>
          <IconRow $h={21}>
            <Slot $w={16} $ml={1}>
              <DecimalIcon more />
            </Slot>
            <Slot $w={16} $ml={7}>
              <DecimalIcon />
            </Slot>
          </IconRow>
        </Stack>
      </GroupBody>
      <GroupLabel $launcher>Number</GroupLabel>
      <LauncherIcon />
    </Group>

    <Group $w={160}>
      <GroupBody $pl={8}>
        <Stack>
          <IconRow>
            <CondFormatIcon />
            <RowLabel $ml={2}>Conditional Formatting</RowLabel>
            <Caret />
          </IconRow>
          <IconRow>
            <TableIcon />
            <RowLabel $ml={2}>Format as Table</RowLabel>
            <Caret $ml={3} />
          </IconRow>
          <IconRow>
            <TableIcon />
            <RowLabel $ml={2}>Cell Styles</RowLabel>
            <Caret $ml={3} />
          </IconRow>
        </Stack>
      </GroupBody>
      <GroupLabel>Styles</GroupLabel>
    </Group>

    <Group $w={78}>
      <GroupBody $pl={7}>
        <Stack>
          <IconRow>
            <InsertCellsIcon />
            <RowLabel $ml={2}>Insert</RowLabel>
            <Caret $ml={10} />
          </IconRow>
          <IconRow>
            <DeleteCellsIcon />
            <RowLabel $ml={2}>Delete</RowLabel>
            <Caret $ml={9} />
          </IconRow>
          <IconRow>
            <FormatCellsIcon />
            <RowLabel $ml={2}>Format</RowLabel>
            <Caret $ml={3} />
          </IconRow>
        </Stack>
      </GroupBody>
      <GroupLabel>Cells</GroupLabel>
    </Group>

    <Group $w={73}>
      <GroupBody $pl={8}>
        <Stack>
          <IconRow>
            <SigmaIcon />
            <Caret $ml={5} />
            <Slot $w={15} $ml={7}>
              <SortIcon />
            </Slot>
            <Caret $ml={5} />
          </IconRow>
          <IconRow>
            <FillDownIcon />
            <Caret $ml={6} />
            <Slot $w={15} $ml={8}>
              <FindIcon />
            </Slot>
            <Caret $ml={5} />
          </IconRow>
          <IconRow>
            <EraserIcon />
            <Caret $ml={5} />
          </IconRow>
        </Stack>
      </GroupBody>
      <GroupLabel>Editing</GroupLabel>
    </Group>

    <Group $w={62}>
      <GroupBody $pt={5}>
        <BigButton $w={61}>
          <CalcIcon />
          <BigLabel>Custom</BigLabel>
        </BigButton>
      </GroupBody>
      <GroupLabel>New Group</GroupLabel>
    </Group>
    <Collapse>
      <Svg w={10} h={7}>
        <path d="M1 6l4-4 4 4" stroke="#666" strokeWidth="1.600" />
      </Svg>
    </Collapse>
  </Ribbon>
);

const App: FC = () => (
  <Stage>
    <GlobalStyle />
    <Screen>
      <TitleBar>
        <Quick>
          <Slot $w={17} $ml={8}>
            <ExcelLogo />
          </Slot>
          <Slot $w={15} $ml={11}>
            <SaveIcon />
          </Slot>
          <Slot $w={15} $ml={12}>
            <UndoIcon c="#2a6fb5" />
          </Slot>
          <Caret $ml={3} />
          <Slot $w={15} $ml={16}>
            <RedoIcon />
          </Slot>
          <Caret $ml={3} $c="#bbb" />
          <Slot $w={6} $ml={15}>
            <Svg w={6} h={8}>
              <path d="M0 1h6" stroke="#777" />
              <path d="M0 4h6L3 7z" fill="#777" />
            </Svg>
          </Slot>
        </Quick>
        <Title>Book1 - Excel</Title>
        <WinButtons>
          <Slot $w={10}>
            <Glyph $size={12}>
              <b>?</b>
            </Glyph>
          </Slot>
          <Slot $w={14} $ml={16}>
            <Svg w={14} h={11}>
              <rect x=".5" y=".5" width="13" height="10" stroke="#666" />
              <path d="M7 8V3M5 5l2-2 2 2" stroke="#666" />
            </Svg>
          </Slot>
          <Slot $w={10} $ml={15}>
            <Svg w={10} h={2}>
              <path d="M0 1h10" stroke="#555" strokeWidth="1.500" />
            </Svg>
          </Slot>
          <Slot $w={11} $ml={16}>
            <Svg w={11}>
              <path d="M.5 3.500h7v7h-7zM3 3V.5h7.500v7H8" stroke="#555" />
            </Svg>
          </Slot>
          <Slot $w={11} $ml={17}>
            <Svg w={11}>
              <path d="M1 1l9 9M10 1l-9 9" stroke="#444" strokeWidth="1.600" />
            </Svg>
          </Slot>
        </WinButtons>
      </TitleBar>

      <TabRow>
        <FileTab>FILE</FileTab>
        <HomeTab>HOME</HomeTab>
        {ribbonTabs.map((t) => (
          <RibbonTab key={t}>{t}</RibbonTab>
        ))}
        <SignIn>Sign in</SignIn>
      </TabRow>

      <RibbonBar />

      <FormulaBar>
        <NameBox>
          A1
          <Caret $c="#666" />
        </NameBox>
        <FxDots>⋮</FxDots>
        <FxBox>
          <FxButtons>
            <Slot $w={16} $ml={8}>
              <Svg w={16}>
                <path d="M2 2l12 12M14 2L2 14" stroke="#bbb" strokeWidth="2" />
              </Svg>
            </Slot>
            <Slot $w={18} $ml={18}>
              <Svg w={18}>
                <path d="M2 9l5 5L16 3" stroke="#bbb" strokeWidth="2" />
              </Svg>
            </Slot>
            <Slot $w={18} $ml={15}>
              <Svg w={18}>
                <path
                  d="M13 3c-2-1-3 0-3.500 2L7.500 14c-.5 2-2 3-4 2M5 8h7M11 9l5 6M16 9l-5 6"
                  stroke="#777"
                  strokeWidth="1.500"
                />
              </Svg>
            </Slot>
          </FxButtons>
          <FxInput>1</FxInput>
          <FxChevron>
            <ChevDown />
          </FxChevron>
        </FxBox>
      </FormulaBar>

      <SheetArea>
        <SheetGrid />
        <VScroll>
          <ScrollBtn>
            <Svg w={8} h={5}>
              <path d="M0 5l4-4 4 4z" fill="#555" />
            </Svg>
          </ScrollBtn>
          <VThumb />
          <VTrack />
          <ScrollBtn>
            <Svg w={8} h={5}>
              <path d="M0 0l4 4 4-4z" fill="#555" />
            </Svg>
          </ScrollBtn>
        </VScroll>
      </SheetArea>

      <TabsBar>
        <NavArrows>
          <NavTri left />
          <NavTri />
        </NavArrows>
        {sheets.map((s) => (
          <SheetTab key={s}>{s}</SheetTab>
        ))}
        <SheetTab $on>Sheet6</SheetTab>
        <Slot $w={16} $ml={31}>
          <PlusCircle />
        </Slot>
        <Dots>⋮</Dots>
        <HScroll>
          <ScrollBtn>
            <NavTri left c="#555" />
          </ScrollBtn>
          <HThumb />
          <HTrack />
          <ScrollBtn>
            <NavTri c="#555" />
          </ScrollBtn>
        </HScroll>
      </TabsBar>

      <CursorMark>
        <Svg w={13}>
          <path d="M6.500 1v11M1 6.500h11" stroke="#111" strokeWidth="2" />
        </Svg>
      </CursorMark>
      <DragTip>20</DragTip>

      <StatusBar>
        <StatusText>Drag outside selection to extend series or fill; drag inside to clear</StatusText>
        <StatusStat $w={79}>AVERAGE: 1.5</StatusStat>
        <StatusStat $w={62}>COUNT: 2</StatusStat>
        <StatusStat $w={52}>SUM: 3</StatusStat>
        <ViewBtn $on $w={35}>
          <ViewNormal />
        </ViewBtn>
        <ViewBtn $w={36}>
          <ViewLayout />
        </ViewBtn>
        <ViewBtn $w={36}>
          <ViewBreak />
        </ViewBtn>
        <ZoomSign $ml={3}>-</ZoomSign>
        <ZoomTrack />
        <ZoomSign>+</ZoomSign>
        <ZoomPct>115%</ZoomPct>
      </StatusBar>

      <Taskbar>
        <StartBtn>
          <WinLogo />
        </StartBtn>
        <SearchBox>
          <SearchGlass />
          <SearchText>Type here to search</SearchText>
          <SearchArt>
            <SearchDoodle />
          </SearchArt>
        </SearchBox>
        <TaskApp $ml={30}>
          <TaskViewIcon />
        </TaskApp>
        <TaskApp $ml={6}>
          <EdgeIcon />
        </TaskApp>
        <TaskApp>
          <FolderIcon />
        </TaskApp>
        <TaskApp>
          <ChromeIcon />
        </TaskApp>
        <TaskApp $on>
          <CanaryIcon />
        </TaskApp>
        <TaskApp $w={37}>
          <GithubIcon />
        </TaskApp>
        <TaskApp $on $active>
          <ExcelTask />
        </TaskApp>
        <TaskApp $on>
          <ChromeIcon />
          <ProfileBadge />
        </TaskApp>
        <TaskApp $w={22} $ml={23}>
          <WeatherSun />
        </TaskApp>
        <TaskApp $w={28} $ml={8}>
          <TrayText>35°C</TrayText>
        </TaskApp>
        <TaskApp $w={12} $ml={23}>
          <TrayChevron />
        </TaskApp>
        <TaskApp $w={14} $ml={10}>
          <MeetIcon />
        </TaskApp>
        <TaskApp $w={14} $ml={9}>
          <WifiIcon />
        </TaskApp>
        <TaskApp $w={16} $ml={7}>
          <VolumeIcon />
        </TaskApp>
        <TaskApp $w={24} $ml={7}>
          <TrayText>ENG</TrayText>
        </TaskApp>
        <Clock>
          9:53 AM
          <br />
          6/25/2024
        </Clock>
        <TaskApp $w={16} $ml={13}>
          <NoticeIcon />
        </TaskApp>
        <TaskEnd />
      </Taskbar>
    </Screen>
  </Stage>
);

export default App;
